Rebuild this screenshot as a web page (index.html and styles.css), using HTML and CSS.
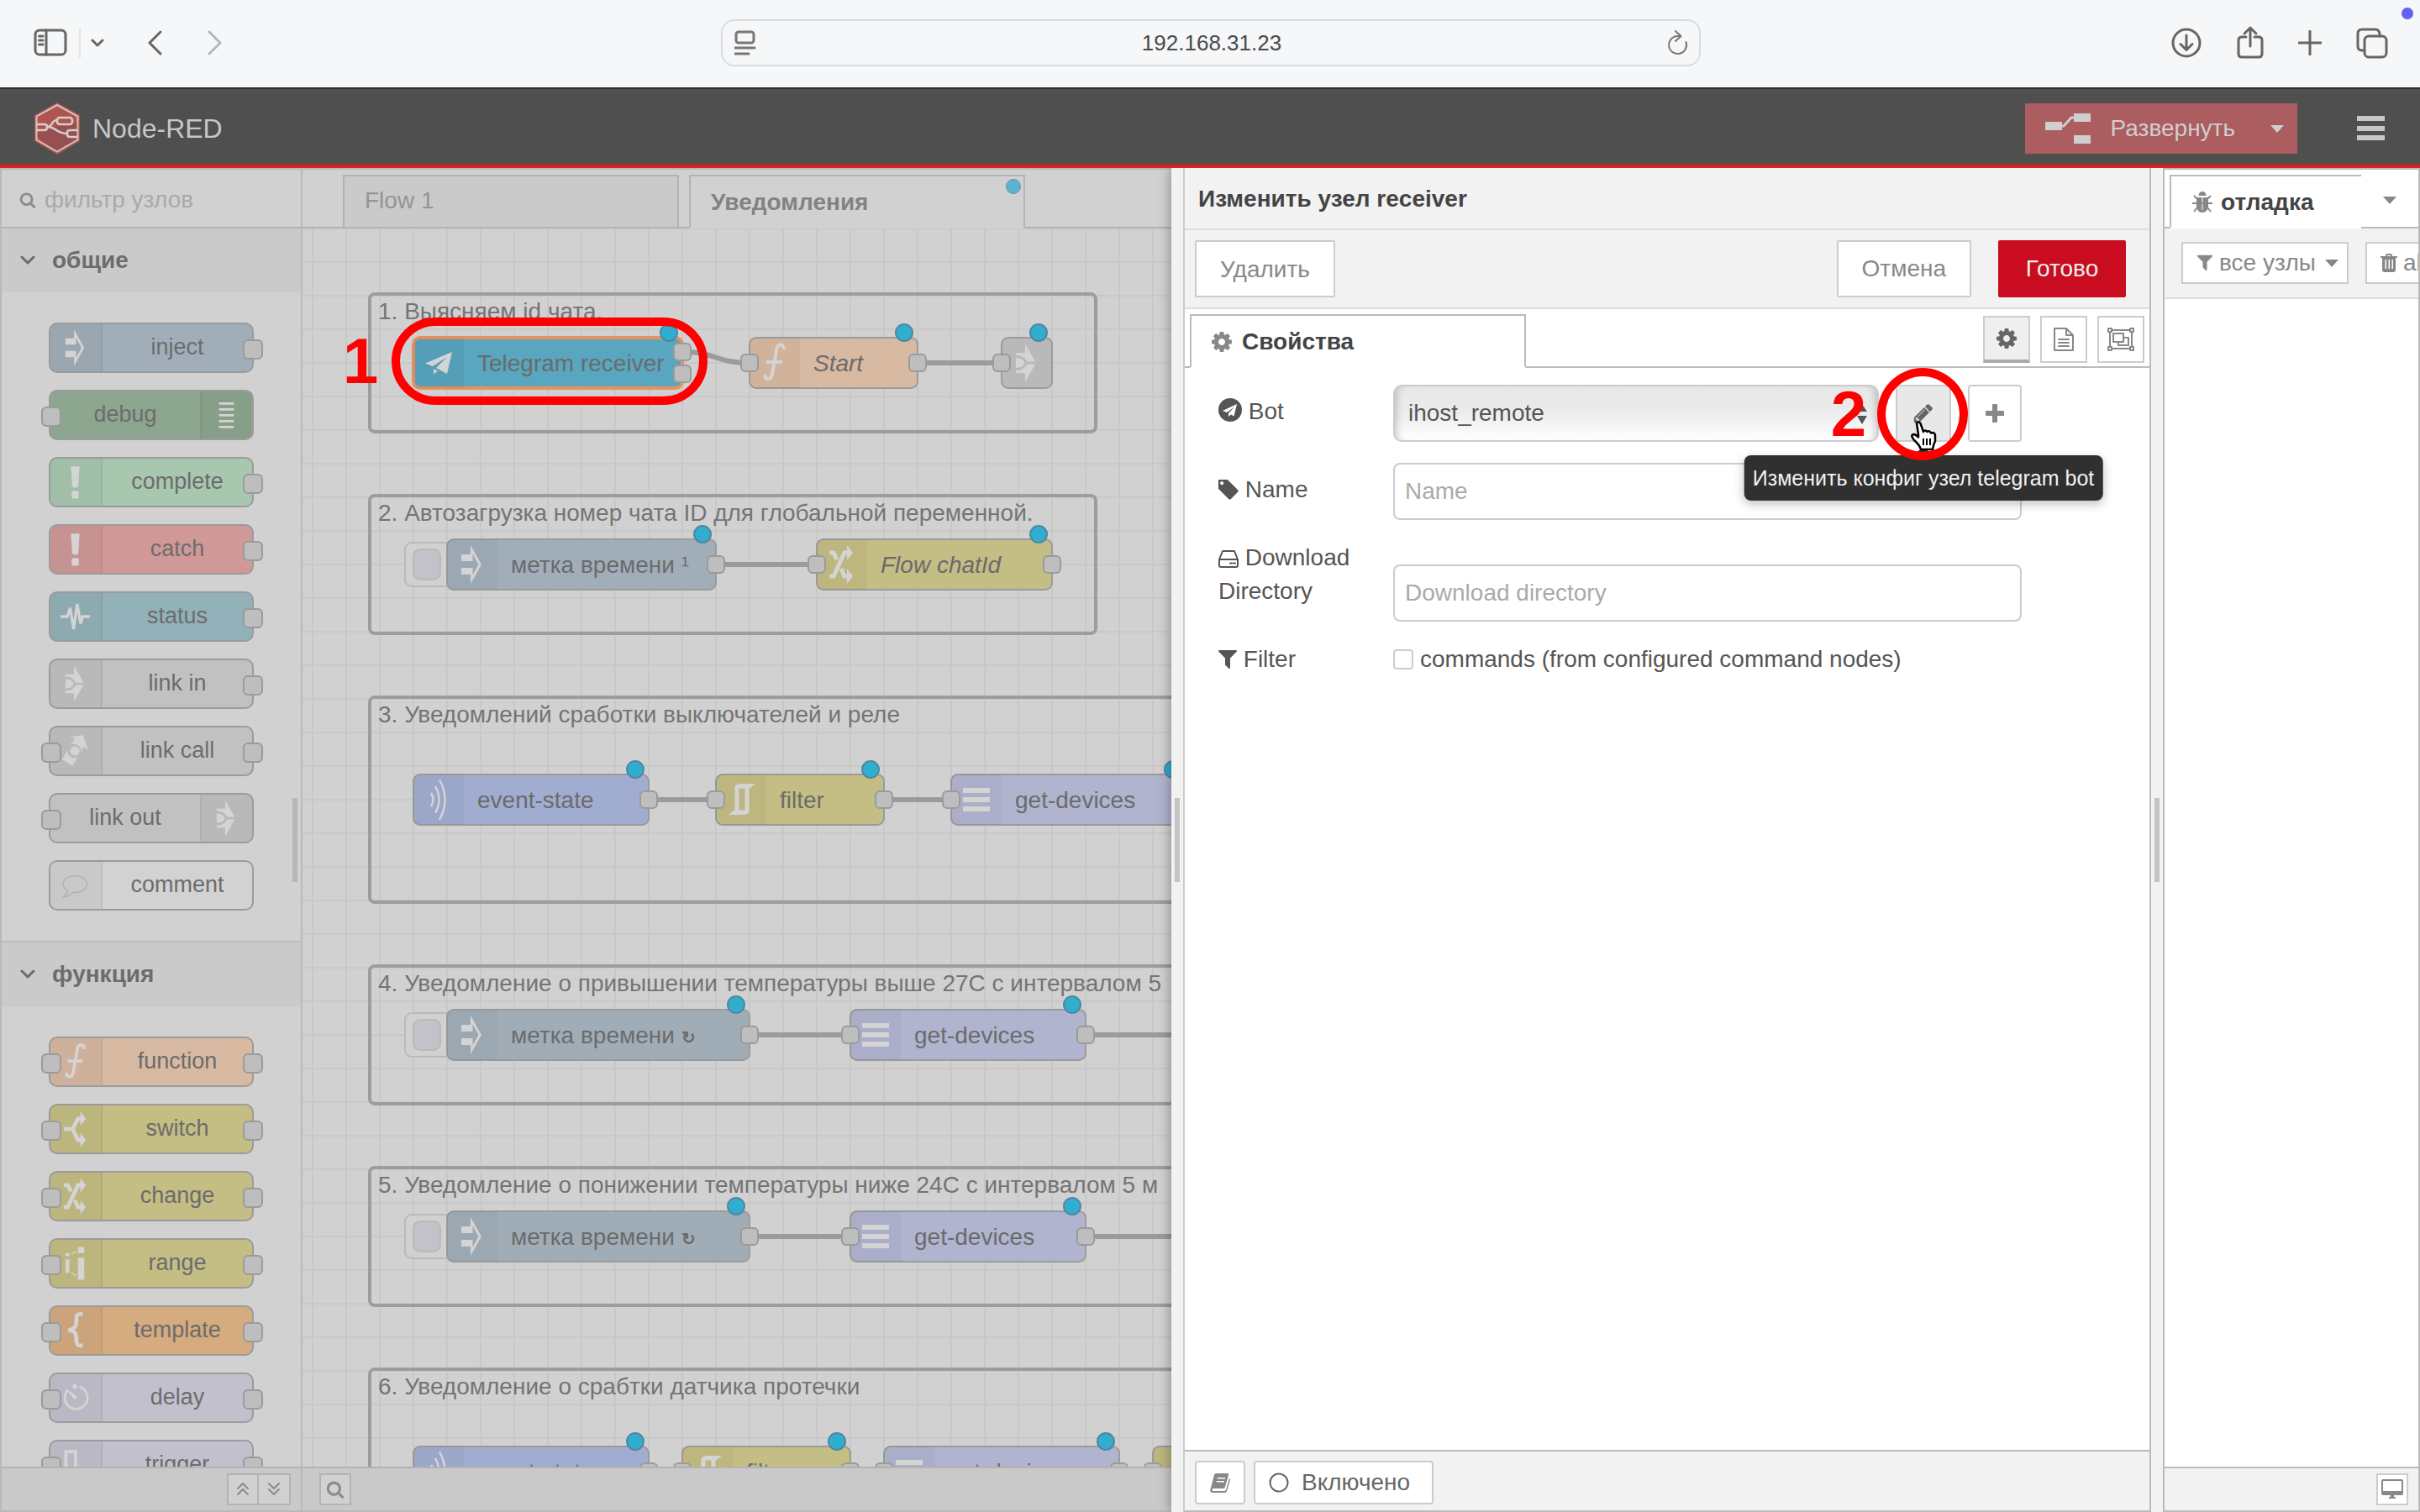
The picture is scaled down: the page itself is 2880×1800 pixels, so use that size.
FILE: index.html
```html
<!DOCTYPE html>
<html lang="ru">
<head>
<meta charset="utf-8">
<title>Node-RED</title>
<link rel="stylesheet" href="styles.css">
</head>
<body>
<svg class="defs" aria-hidden="true">
  <symbol id="n-inject" viewBox="0 0 60 60"><path fill-rule="evenodd" d="M17 18H28V7L41 30L28 53V42H17V34H30.500V42.500L37.500 30L30.500 17.500V26H17Z"/></symbol>
  <symbol id="n-debug" viewBox="0 0 60 60"><path d="M20 14h19v3H20zM20 21.500h19v3H20zM20 29h19v3H20zM20 36.500h19v3H20zM20 44h19v3H20z"/></symbol>
  <symbol id="n-alert" viewBox="0 0 60 60"><path d="M24 10H35L33.500 34Q33 37 29.500 37T25.500 34Z"/><rect x="25" y="41" width="9" height="10" rx="2"/></symbol>
  <symbol id="n-status" viewBox="0 0 60 60"><path class="line" stroke-width="3.500" d="M11 30H19.500L23 19L27.500 46L32 14L36.500 39L39 30H48"/></symbol>
  <symbol id="n-link" viewBox="0 0 60 60"><path d="M17 18H28V7L40 28.500H30C28.500 24 24 21 17 21ZM17 24C24 24 27 27 27 30S24 36 17 36ZM17 42H28V53L40 31.500H30C28.500 36 24 39 17 39Z"/></symbol>
  <symbol id="n-call" viewBox="0 0 60 60"><path d="M22 12L39 10L46 28L40 25L37 31A9 9 0 0 0 24 22L29 14ZM20 28A9 9 0 0 0 33 38L26 49L13 41Z"/><circle cx="29" cy="30" r="6"/></symbol>
  <symbol id="n-comment" viewBox="0 0 60 60"><path class="line" stroke-width="1.500" d="M29 18C20 18 14 23 14 28.500C14 32 16 35 20 37C19 41 17 43 14.500 45C20 44.500 24 42.500 26 39C37 40 44.500 35 44.500 28.500C44.500 23 38 18 29 18Z"/></symbol>
  <symbol id="n-function" viewBox="0 0 60 60"><path class="line" stroke-width="4" d="M41 14C41 7 33 6 32 15L27 43C26 51 18 51 18.500 44M20 29H39"/></symbol>
  <symbol id="n-switch" viewBox="0 0 60 60"><path class="line" stroke-width="5" d="M15 30H26L33 17H38M26 30L33 44H38"/><path d="M36 8L43 17L36 26ZM36 35L43 44L36 53Z"/></symbol>
  <symbol id="n-change" viewBox="0 0 60 60"><path class="line" stroke-width="5" d="M15 44H20L33 16H38M15 16H20L24 24M29 35L33 44H38"/><path d="M36 7L43 16L36 25ZM36 35L43 44L36 53Z"/></symbol>
  <symbol id="n-range" viewBox="0 0 60 60"><path d="M17 17h5v4h-5zM17 25h5v17h-5zM33 9h8v8h-8zM33 23h8v28h-8z"/><path class="line" stroke-width="1.500" d="M25 18L31 15M24 42L31 46"/></symbol>
  <symbol id="n-template" viewBox="0 0 60 60"><path class="line" stroke-width="5" d="M39 9C31 8 31 11 31 16C31 24 30 28 21 29.500C30 31 31 34 31 42C31 47 32 50 39 49"/></symbol>
  <symbol id="n-delay" viewBox="0 0 60 60"><path class="line" stroke-width="3" d="M20 20A14.500 14.500 0 1 0 35 16"/><path d="M16 17L31 28Q32 32 28 31.500Z"/><circle cx="29" cy="15.500" r="3"/></symbol>
  <symbol id="n-trigger" viewBox="0 0 60 60"><path class="line" stroke-width="4" d="M12 49H17.500V13H30V49H44"/></symbol>
  <symbol id="n-plane" viewBox="0 0 60 60"><path d="M46 17L14 30.500L23 34L40 23L27 36L40 43ZM24 37L29 40L24 43Z"/></symbol>
  <symbol id="n-event" viewBox="0 0 60 60"><path class="line" stroke-width="2.500" d="M21 22Q26 30 21 38M26 14Q35 30 26 46M31 6Q44 30 31 54"/></symbol>
  <symbol id="n-filter" viewBox="0 0 60 60"><rect class="line" x="25" y="14" width="12" height="31" rx="2" stroke-width="5"/><path d="M28 11H47L41 16H34ZM34 48H15L21 43H28Z"/></symbol>
  <symbol id="n-bars" viewBox="0 0 60 60"><path d="M14 16h32v6H14zM14 27h32v6H14zM14 38h32v6H14z"/></symbol>
  <symbol id="i-search" viewBox="0 0 1792 1792"><path d="M1216 832q0-185-131.500-316.500t-316.500-131.500-316.500 131.500-131.500 316.500 131.500 316.500 316.500 131.500 316.500-131.500 131.500-316.500zm512 832q0 52-38 90t-90 38q-54 0-90-38l-343-342q-179 124-399 124-143 0-273.500-55.500t-225-150-150-225-55.500-273.500 55.500-273.500 150-225 225-150 273.500-55.500 273.500 55.500 225 150 150 225 55.500 273.500q0 220-124 399l343 343q37 37 37 90z"/></symbol>
  <symbol id="i-cog" viewBox="0 128 1536 1536"><path d="M1024 896q0-106-75-181t-181-75-181 75-75 181 75 181 181 75 181-75 75-181zm512-109v222q0 12-8 23t-20 13l-185 28q-19 54-39 91 35 50 107 138 10 12 10 25t-9 23q-27 37-99 108t-94 71q-12 0-26-9l-138-108q-44 23-91 38-16 136-29 186-7 28-36 28h-222q-14 0-24.500-8.500t-11.500-21.500l-28-184q-49-16-90-37l-141 107q-10 9-25 9-14 0-25-11-126-114-165-168-7-10-7-23 0-12 8-23 15-21 51-66.500t54-70.500q-27-50-41-99l-183-27q-13-2-21-12.500t-8-23.500v-222q0-12 8-23t19-13l186-28q14-46 39-92-40-57-107-138-10-12-10-24 0-10 9-23 26-36 98.500-107.500t94.500-71.500q13 0 26 10l138 107q44-23 91-38 16-136 29-186 7-28 36-28h222q14 0 24.500 8.500t11.500 21.500l28 184q49 16 90 37l142-107q9-9 24-9 13 0 25 10 129 119 165 170 7 8 7 22 0 12-8 23-15 21-51 66.500t-54 70.500q26 50 41 98l183 28q13 2 21 12.500t8 23.500z"/></symbol>
  <symbol id="i-filter" viewBox="192 192 1408 1536"><path d="M1595 295q17 41-14 70l-493 493v742q0 42-39 59-13 5-25 5-27 0-45-19l-256-256q-19-19-19-45v-486l-493-493q-31-29-14-70 17-39 59-39h1280q42 0 59 39z"/></symbol>
  <symbol id="i-pencil" viewBox="0 0 1792 1792"><path d="M491 1536l91-91-235-235-91 91v107h128v128h107zm523-928q0-22-22-22-10 0-17 7l-542 542q-7 7-7 17 0 22 22 22 10 0 17-7l542-542q7-7 7-17zm-54-192l416 416-832 832h-416v-416zm683 96q0 53-37 90l-166 166-416-416 166-165q36-38 90-38 53 0 91 38l235 234q37 39 37 91z"/></symbol>
  <symbol id="i-tag" viewBox="192 192 1480 1480"><path d="M576 448q0-53-37.500-90.500t-90.500-37.500-90.500 37.500-37.500 90.500 37.500 90.500 90.500 37.500 90.500-37.500 37.500-90.500zm1067 576q0 53-37 90l-491 492q-39 37-91 37-53 0-90-37l-715-716q-38-37-64.500-101t-26.500-117v-416q0-52 38-90t90-38h416q53 0 117 26.500t102 64.500l715 714q37 39 37 91z"/></symbol>
  <symbol id="i-caret" viewBox="0 0 16 9"><path d="M0 0H16L8 9Z"/></symbol>
  <pattern id="grid" width="40" height="40" x="12" y="0" patternUnits="userSpaceOnUse"><path class="grid-line" d="M0 0H40M0 40H40M0 0V40M40 0V40"/></pattern>
</svg>

<header class="browser">
  <nav class="browser-nav" aria-label="История">
    <button class="bare" aria-label="Боковая панель"><svg class="stroke" width="40" height="34" viewBox="0 0 40 34"><rect x="2" y="2" width="36" height="29" rx="5"/><path d="M15 2V31M6.500 9H11M6.500 14H11M6.500 19H11"/></svg></button>
    <i class="rule"></i>
    <button class="bare" aria-label="Меню"><svg class="stroke" width="16" height="10" viewBox="0 0 16 10"><path d="M2 2L8 8L14 2"/></svg></button>
    <button class="bare back" aria-label="Назад"><svg class="stroke" width="20" height="32" viewBox="0 0 20 32"><path d="M17 3L4 16L17 29"/></svg></button>
    <button class="bare forward" aria-label="Вперёд"><svg class="stroke" width="20" height="32" viewBox="0 0 20 32"><path d="M3 3L16 16L3 29"/></svg></button>
  </nav>
  <div class="address">
    <svg class="stroke" width="26" height="32" viewBox="0 0 26 32"><rect x="2" y="3" width="21" height="13" rx="3"/><path d="M1 22H24M1 29H17"/></svg>
    <span>192.168.31.23</span>
    <svg class="stroke thin" width="26" height="32" viewBox="0 0 26 32"><path d="M22.500 15A10.500 10.500 0 1 1 12.500 8H16M10 2L16.500 8L10 14"/></svg>
  </div>
  <div class="browser-tools">
    <button class="bare" aria-label="Загрузки"><svg class="stroke" width="38" height="38" viewBox="0 0 38 38"><circle cx="19" cy="19" r="16"/><path d="M19 10V27M12 20.500L19 27.500L26 20.500"/></svg></button>
    <button class="bare" aria-label="Поделиться"><svg class="stroke" width="32" height="42" viewBox="0 0 32 42"><path d="M11 14H6Q2 14 2 18V34Q2 38 6 38H26Q30 38 30 34V18Q30 14 26 14H21M16 25V3M9 10L16 3L23 10"/></svg></button>
    <button class="bare" aria-label="Новая вкладка"><svg class="stroke" width="28" height="30" viewBox="0 0 28 30"><path d="M14 1V29M0 15H28"/></svg></button>
    <button class="bare tabs-button" aria-label="Вкладки"><svg class="stroke" width="38" height="38" viewBox="0 0 38 38"><rect x="10" y="11" width="26" height="25" rx="5"/><path d="M10 28H7Q2 28 2 23V8Q2 3 7 3H23Q27 3 28 8V11"/></svg></button>
  </div>
</header>

<header class="app-bar">
  <div class="brand">
    <svg width="56" height="64" viewBox="0 0 56 64"><path fill="#b0544f" d="M28 1L55 16V47L28 63L1 47V16Z"/><path fill="#97504f" d="M30 28L54 26V46L28 61L3 40V36Z"/><path fill="none" stroke="#d6c1bf" stroke-width="2" d="M28 4L52.500 17.500V45.500L28 59.500L3.500 45.500V17.500Z"/><g fill="none" stroke="#d6cfcf" stroke-width="2.500"><path d="M3 27H13Q16 27 16 30V31Q16 34 13 34H3M52 34H43Q40 34 40 37V39Q40 42 43 42H52M16 30C24 30 20 22 28 22M16 30C28 30 26 38 40 38"/><rect x="28" y="19" width="18" height="8" rx="3"/></g></svg>
    <span>Node-RED</span>
  </div>
  <button class="deploy">
    <svg width="54" height="38" viewBox="0 0 54 38"><path fill="#cfcfcf" d="M0 11H20V21H0ZM34 1H54V11H34ZM34 27H54V37H34Z"/><path fill="none" stroke="#cfcfcf" stroke-width="3" d="M19 16H22L31 6H35"/></svg>
    <span>Развернуть</span>
    <svg width="16" height="9"><use href="#i-caret"/></svg>
  </button>
  <button class="bare menu" aria-label="Меню"><svg width="36" height="30" viewBox="0 0 36 30"><path d="M1 0h33v6H1zM1 12h33v6H1zM1 23h33v6H1z"/></svg></button>
</header>

<main class="editor">
  <aside class="palette">
    <label class="palette-search"><svg width="22" height="20"><use href="#i-search"/></svg><input type="text" placeholder="фильтр узлов" aria-label="фильтр узлов"></label>
    <div class="palette-list">
      <h2 class="category"><svg class="stroke" width="18" height="12" viewBox="0 0 18 12"><path d="M2 2L9 9L16 2"/></svg>общие</h2>
      <div class="node-list">
        <div class="pnode c-inject out"><svg><use href="#n-inject"/></svg><span>inject</span></div>
        <div class="pnode c-debug in flip"><svg><use href="#n-debug"/></svg><span>debug</span></div>
        <div class="pnode c-complete out"><svg><use href="#n-alert"/></svg><span>complete</span></div>
        <div class="pnode c-catch out"><svg><use href="#n-alert"/></svg><span>catch</span></div>
        <div class="pnode c-status out"><svg><use href="#n-status"/></svg><span>status</span></div>
        <div class="pnode c-link out"><svg><use href="#n-link"/></svg><span>link in</span></div>
        <div class="pnode c-link in out"><svg><use href="#n-call"/></svg><span>link call</span></div>
        <div class="pnode c-link in flip"><svg><use href="#n-link"/></svg><span>link out</span></div>
        <div class="pnode c-comment"><svg><use href="#n-comment"/></svg><span>comment</span></div>
      </div>
      <h2 class="category"><svg class="stroke" width="18" height="12" viewBox="0 0 18 12"><path d="M2 2L9 9L16 2"/></svg>функция</h2>
      <div class="node-list">
        <div class="pnode c-function in out"><svg><use href="#n-function"/></svg><span>function</span></div>
        <div class="pnode c-switch in out"><svg><use href="#n-switch"/></svg><span>switch</span></div>
        <div class="pnode c-switch in out"><svg><use href="#n-change"/></svg><span>change</span></div>
        <div class="pnode c-switch in out"><svg><use href="#n-range"/></svg><span>range</span></div>
        <div class="pnode c-template in out"><svg><use href="#n-template"/></svg><span>template</span></div>
        <div class="pnode c-delay in out"><svg><use href="#n-delay"/></svg><span>delay</span></div>
        <div class="pnode c-delay in out"><svg><use href="#n-trigger"/></svg><span>trigger</span></div>
      </div>
    </div>
    <footer class="palette-footer">
      <button aria-label="Свернуть всё"><svg class="stroke" width="18" height="20" viewBox="0 0 18 20"><path d="M3 9L9 3L15 9M3 16L9 10L15 16"/></svg></button>
      <button aria-label="Развернуть всё"><svg class="stroke" width="18" height="20" viewBox="0 0 18 20"><path d="M3 3L9 9L15 3M3 10L9 16L15 10"/></svg></button>
    </footer>
    <i class="palette-grip"></i>
  </aside>

  <section class="workspace">
    <div class="flow-tabs">
      <button class="flow-tab">Flow 1</button>
      <button class="flow-tab active">Уведомления<i class="changed"></i></button>
    </div>
    <div class="canvas">
      <svg class="flow" width="100%" height="100%">
        <rect width="100%" height="100%" fill="url(#grid)"/>
        <g class="group">
          <rect x="80" y="78" width="864" height="164" rx="6"/><text x="90" y="108">1. Выясняем id чата.</text>
          <rect x="80" y="318" width="864" height="164" rx="6"/><text x="90" y="348">2. Автозагрузка номер чата ID для глобальной переменной.</text>
          <rect x="80" y="558" width="1400" height="244" rx="6"/><text x="90" y="588">3. Уведомлений сработки выключателей и реле</text>
          <rect x="80" y="878" width="1400" height="164" rx="6"/><text x="90" y="908">4. Уведомление о привышении температуры выше 27С с интервалом 5</text>
          <rect x="80" y="1118" width="1400" height="164" rx="6"/><text x="90" y="1148">5. Уведомление о понижении температуры ниже 24С с интервалом 5 м</text>
          <rect x="80" y="1358" width="1400" height="244" rx="6"/><text x="90" y="1388">6. Уведомление о срабтки датчика протечки</text>
        </g>
        <path class="wire" d="M452 147C492 147 492 160 532 160M732 160H832M492 400H612M412 680H492M692 680H772M532 960H652M932 960H1100M532 1200H652M932 1200H1100"/>

        <g class="node selected c-telegram" transform="translate(132 130)"><rect class="body" width="320" height="60" rx="8"/><path class="shade" d="M8 0H60V60H8Q0 60 0 52V8Q0 0 8 0Z"/><use href="#n-plane" width="60" height="60"/><text x="76" y="40">Telegram receiver</text><rect class="port" x="310" y="7" width="20" height="20" rx="5"/><rect class="port" x="310" y="33" width="20" height="20" rx="5"/><circle class="dot" cx="304" cy="-6" r="10"/></g>
        <g class="node c-function" transform="translate(532 130)"><rect class="body" width="200" height="60" rx="8"/><path class="shade" d="M8 0H60V60H8Q0 60 0 52V8Q0 0 8 0Z"/><use href="#n-function" width="60" height="60"/><text class="own" x="76" y="40">Start</text><rect class="port" x="-10" y="20" width="20" height="20" rx="5"/><rect class="port" x="190" y="20" width="20" height="20" rx="5"/><circle class="dot" cx="184" cy="-6" r="10"/></g>
        <g class="node c-linkout" transform="translate(832 130)"><rect class="body" width="60" height="60" rx="8"/><use href="#n-link" width="60" height="60"/><rect class="port" x="-10" y="20" width="20" height="20" rx="5"/><circle class="dot" cx="44" cy="-6" r="10"/></g>

        <g class="node c-inject" transform="translate(172 370)"><rect class="trigger" x="-50" y="4" width="64" height="52" rx="8"/><rect class="trigger key" x="-40" y="12" width="32" height="36" rx="8"/><rect class="body" width="320" height="60" rx="8"/><path class="shade" d="M8 0H60V60H8Q0 60 0 52V8Q0 0 8 0Z"/><use href="#n-inject" width="60" height="60"/><text x="76" y="40">метка времени ¹</text><rect class="port" x="310" y="20" width="20" height="20" rx="5"/><circle class="dot" cx="304" cy="-6" r="10"/></g>
        <g class="node c-switch" transform="translate(612 370)"><rect class="body" width="280" height="60" rx="8"/><path class="shade" d="M8 0H60V60H8Q0 60 0 52V8Q0 0 8 0Z"/><use href="#n-change" width="60" height="60"/><text class="own" x="76" y="40">Flow chatId</text><rect class="port" x="-10" y="20" width="20" height="20" rx="5"/><rect class="port" x="270" y="20" width="20" height="20" rx="5"/><circle class="dot" cx="264" cy="-6" r="10"/></g>

        <g class="node c-event" transform="translate(132 650)"><rect class="body" width="280" height="60" rx="8"/><path class="shade" d="M8 0H60V60H8Q0 60 0 52V8Q0 0 8 0Z"/><use href="#n-event" width="60" height="60"/><text x="76" y="40">event-state</text><rect class="port" x="270" y="20" width="20" height="20" rx="5"/><circle class="dot" cx="264" cy="-6" r="10"/></g>
        <g class="node c-switch" transform="translate(492 650)"><rect class="body" width="200" height="60" rx="8"/><path class="shade" d="M8 0H60V60H8Q0 60 0 52V8Q0 0 8 0Z"/><use href="#n-filter" width="60" height="60"/><text x="76" y="40">filter</text><rect class="port" x="-10" y="20" width="20" height="20" rx="5"/><rect class="port" x="190" y="20" width="20" height="20" rx="5"/><circle class="dot" cx="184" cy="-6" r="10"/></g>
        <g class="node c-devices" transform="translate(772 650)"><rect class="body" width="280" height="60" rx="8"/><path class="shade" d="M8 0H60V60H8Q0 60 0 52V8Q0 0 8 0Z"/><use href="#n-bars" width="60" height="60"/><text x="76" y="40">get-devices</text><rect class="port" x="-10" y="20" width="20" height="20" rx="5"/><circle class="dot" cx="264" cy="-6" r="10"/></g>

        <g class="node c-repeat" transform="translate(172 930)"><rect class="trigger" x="-50" y="4" width="64" height="52" rx="8"/><rect class="trigger key" x="-40" y="12" width="32" height="36" rx="8"/><rect class="body" width="360" height="60" rx="8"/><path class="shade" d="M8 0H60V60H8Q0 60 0 52V8Q0 0 8 0Z"/><use href="#n-inject" width="60" height="60"/><text x="76" y="40">метка времени <tspan class="loop">↻</tspan></text><rect class="port" x="350" y="20" width="20" height="20" rx="5"/><circle class="dot" cx="344" cy="-6" r="10"/></g>
        <g class="node c-devices" transform="translate(652 930)"><rect class="body" width="280" height="60" rx="8"/><path class="shade" d="M8 0H60V60H8Q0 60 0 52V8Q0 0 8 0Z"/><use href="#n-bars" width="60" height="60"/><text x="76" y="40">get-devices</text><rect class="port" x="-10" y="20" width="20" height="20" rx="5"/><rect class="port" x="270" y="20" width="20" height="20" rx="5"/><circle class="dot" cx="264" cy="-6" r="10"/></g>

        <g class="node c-repeat" transform="translate(172 1170)"><rect class="trigger" x="-50" y="4" width="64" height="52" rx="8"/><rect class="trigger key" x="-40" y="12" width="32" height="36" rx="8"/><rect class="body" width="360" height="60" rx="8"/><path class="shade" d="M8 0H60V60H8Q0 60 0 52V8Q0 0 8 0Z"/><use href="#n-inject" width="60" height="60"/><text x="76" y="40">метка времени <tspan class="loop">↻</tspan></text><rect class="port" x="350" y="20" width="20" height="20" rx="5"/><circle class="dot" cx="344" cy="-6" r="10"/></g>
        <g class="node c-devices" transform="translate(652 1170)"><rect class="body" width="280" height="60" rx="8"/><path class="shade" d="M8 0H60V60H8Q0 60 0 52V8Q0 0 8 0Z"/><use href="#n-bars" width="60" height="60"/><text x="76" y="40">get-devices</text><rect class="port" x="-10" y="20" width="20" height="20" rx="5"/><rect class="port" x="270" y="20" width="20" height="20" rx="5"/><circle class="dot" cx="264" cy="-6" r="10"/></g>

        <g class="node c-event" transform="translate(132 1450)"><rect class="body" width="280" height="60" rx="8"/><path class="shade" d="M8 0H60V60H8Q0 60 0 52V8Q0 0 8 0Z"/><use href="#n-event" width="60" height="60"/><text x="76" y="40">event-state</text><rect class="port" x="270" y="20" width="20" height="20" rx="5"/><circle class="dot" cx="264" cy="-6" r="10"/></g>
        <g class="node c-switch" transform="translate(452 1450)"><rect class="body" width="200" height="60" rx="8"/><path class="shade" d="M8 0H60V60H8Q0 60 0 52V8Q0 0 8 0Z"/><use href="#n-filter" width="60" height="60"/><text x="76" y="40">filter</text><rect class="port" x="-10" y="20" width="20" height="20" rx="5"/><rect class="port" x="190" y="20" width="20" height="20" rx="5"/><circle class="dot" cx="184" cy="-6" r="10"/></g>
        <g class="node c-devices" transform="translate(692 1450)"><rect class="body" width="280" height="60" rx="8"/><path class="shade" d="M8 0H60V60H8Q0 60 0 52V8Q0 0 8 0Z"/><use href="#n-bars" width="60" height="60"/><text x="76" y="40">get-devices</text><rect class="port" x="-10" y="20" width="20" height="20" rx="5"/><rect class="port" x="270" y="20" width="20" height="20" rx="5"/><circle class="dot" cx="264" cy="-6" r="10"/></g>
        <g class="node c-switch" transform="translate(1012 1450)"><rect class="body" width="200" height="60" rx="8"/><path class="shade" d="M8 0H60V60H8Q0 60 0 52V8Q0 0 8 0Z"/><rect class="port" x="-10" y="20" width="20" height="20" rx="5"/></g>

        <rect class="callout" x="111" y="111" width="366" height="94" rx="47"/>
        <text class="callout-number" x="48" y="184">1</text>
      </svg>
    </div>
    <footer class="workspace-footer"><button aria-label="Поиск"><svg width="24" height="22"><use href="#i-search"/></svg></button></footer>
  </section>

  <div class="gutter tray-gutter"><i></i></div>

  <section class="tray">
    <h1 class="tray-title">Изменить узел receiver</h1>
    <div class="tray-actions">
      <button class="btn">Удалить</button>
      <button class="btn cancel">Отмена</button>
      <button class="btn primary">Готово</button>
    </div>
    <div class="tray-tabs">
      <button class="tray-tab"><svg width="24" height="24"><use href="#i-cog"/></svg>Свойства</button>
      <div class="tray-views">
        <button class="active" aria-label="Свойства"><svg width="24" height="24"><use href="#i-cog"/></svg></button>
        <button aria-label="Описание"><svg class="stroke" width="26" height="30" viewBox="0 0 26 30"><path d="M2 2H16L24 10V28H2ZM16 2V10H24M7 15H19M7 19H19M7 23H19"/></svg></button>
        <button aria-label="Внешний вид"><svg class="stroke" width="34" height="30" viewBox="0 0 34 30"><path d="M4 4H30V26H4ZM8 8H20V18H8ZM20 13H26V22H14V18"/><g class="knob"><rect x="2" y="2" width="4" height="4"/><rect x="28" y="2" width="4" height="4"/><rect x="2" y="24" width="4" height="4"/><rect x="28" y="24" width="4" height="4"/></g></svg></button>
      </div>
    </div>
    <form class="tray-body">
      <div class="form-row">
        <label for="bot"><svg width="28" height="28" viewBox="0 0 28 28"><circle cx="14" cy="14" r="14"/><path fill="#fff" d="M22 7L5 15L10 17L19 10.500L12 18V22L15 19.500L18.500 21.500Z"/></svg> Bot</label>
        <div class="controls">
          <span class="select"><select id="bot"><option>ihost_remote</option></select><svg width="12" height="24" viewBox="0 0 12 24"><path d="M6 0L12 9H0ZM0 14H12L6 24Z"/></svg><b class="callout-two">2</b></span>
          <span class="edit">
            <button type="button" class="square pressed" aria-label="Изменить" aria-describedby="tip"><svg width="26" height="26"><use href="#i-pencil"/></svg></button>
            <span class="tooltip" id="tip" role="tooltip">Изменить конфиг узел telegram bot</span>
            <i class="callout-ring"></i>
            <svg class="pointer" width="34" height="38" viewBox="0 0 34 38"><path fill="#fff" stroke="#000" stroke-width="2.500" stroke-linejoin="round" d="M8 4Q10 1 12.500 4L16 14Q18 11 20.500 14Q23 12 25 15.500Q29 14 30 18V25Q28 29 27 35H13Q11 29 5 24Q1 19 3 17.500Q6 16 10 20.500V17Z"/><path fill="none" stroke="#000" stroke-width="2" d="M16 22V30M20 22V30M24 22V30"/></svg>
          </span>
          <button type="button" class="square add" aria-label="Добавить"><svg width="22" height="22" viewBox="0 0 22 22"><path d="M8 1Q8 0 9 0H13Q14 0 14 1V8H21Q22 8 22 9V13Q22 14 21 14H14V21Q14 22 13 22H9Q8 22 8 21V14H1Q0 14 0 13V9Q0 8 1 8H8Z"/></svg></button>
        </div>
      </div>
      <div class="form-row">
        <label for="name"><svg width="24" height="24"><use href="#i-tag"/></svg> Name</label>
        <div class="controls"><input class="text" id="name" type="text" placeholder="Name"></div>
      </div>
      <div class="form-row">
        <label for="dir"><svg class="stroke" width="24" height="22" viewBox="0 0 24 22"><path d="M1 12L5 2H19L23 12V19Q23 21 21 21H3Q1 21 1 19ZM1 12H23M14 16.500H16M18 16.500H20"/></svg> Download Directory</label>
        <div class="controls"><input class="text" id="dir" type="text" placeholder="Download directory"></div>
      </div>
      <div class="form-row check-row">
        <span class="legend"><svg width="22" height="24"><use href="#i-filter"/></svg> Filter</span>
        <label class="check"><input type="checkbox">commands (from configured command nodes)</label>
      </div>
    </form>
    <footer class="tray-footer">
      <button class="foot-btn book" aria-label="Справка"><svg width="24" height="24" viewBox="0 0 24 24"><path fill-rule="evenodd" d="M7 1H21Q22.500 1 22 3L18 17Q17.500 19 16 19H4Q2.500 19 2.500 20.500T4 22H17Q18.500 22 19 20.500L23 7Q24.500 8 24 9L20 22Q19.500 24 18 24H3Q-0.500 24 0.500 20L5 3Q5.500 1 7 1ZM9 6H18V7.500H8.500ZM8 10H17V11.500H7.500Z"/></svg></button>
      <button class="foot-btn"><svg class="stroke" width="24" height="24" viewBox="0 0 24 24"><circle cx="12" cy="12" r="10.500"/></svg>Включено</button>
    </footer>
  </section>

  <div class="gutter side-gutter"><i></i></div>

  <aside class="sidebar">
    <div class="side-tabs">
      <button class="side-tab"><svg width="24" height="26" viewBox="0 0 24 26"><path d="M7.500 5Q8 0 12 0T16.500 5ZM5 7H11.500V22H12.500V7H19V19Q17 25 12 25T5 19Z"/><path fill="none" stroke="#888" stroke-width="2" d="M0 14H24M2 5L6 9M22 5L18 9M2 24L6 19M22 24L18 19"/></svg>отладка</button>
      <button class="bare side-more" aria-label="Вкладки"><svg width="16" height="9"><use href="#i-caret"/></svg></button>
    </div>
    <div class="side-tools">
      <button><svg width="20" height="20"><use href="#i-filter"/></svg>все узлы<svg class="caret" width="16" height="9"><use href="#i-caret"/></svg></button>
      <button><svg width="20" height="22" viewBox="0 0 20 22"><path fill-rule="evenodd" d="M6 3Q6 0 8 0H12Q14 0 14 3H20V5H18V19Q18 22 15 22H5Q2 22 2 19V5H0V3ZM8 2V3H12V2ZM5.500 7H7V18H5.500ZM9.500 7H11V18H9.500ZM13.500 7H15V18H13.500Z"/></svg>all</button>
    </div>
    <div class="side-body"></div>
    <footer class="side-footer"><button aria-label="Открыть в новом окне"><svg width="26" height="24" viewBox="0 0 26 24"><path fill-rule="evenodd" d="M2 0H24Q26 0 26 2V17Q26 19 24 19H15V21H17V23H9V21H11V19H2Q0 19 0 17V2Q0 0 2 0ZM2 2V14H24V2Z"/></svg></button></footer>
  </aside>
</main>
</body>
</html>
```
FILE: styles.css
```css
* { box-sizing: border-box; }
html, body { height: 100%; }
body {
  margin: 0;
  display: flex;
  flex-direction: column;
  overflow: hidden;
  background: #fff;
  color: #555;
  font: 28px/40px "Liberation Sans", Arial, sans-serif;
}
button, input, select { font: inherit; color: inherit; margin: 0; }
button { display: flex; align-items: center; justify-content: center; padding: 0; border: 0; background: none; white-space: nowrap; }
svg { flex: none; fill: currentColor; }
.defs { position: absolute; width: 0; height: 0; }
.stroke { fill: none; stroke: currentColor; stroke-width: 3; stroke-linecap: round; stroke-linejoin: round; }
.stroke.thin { stroke-width: 2; }
.line { fill: none; stroke: currentColor; }

/* Browser chrome */
.browser {
  flex: none;
  height: 104px;
  padding: 0 38px 2px 40px;
  display: grid;
  grid-template-columns: 1fr 1166px 1fr;
  align-items: center;
  background: #f5f7f9;
  color: #666;
}
.browser-nav, .browser-tools { display: flex; align-items: center; }
.rule { width: 2px; height: 36px; margin: 0 12px 0 14px; background: #e2e4e6; }
.back { margin-left: 50px; }
.forward { margin-left: 52px; color: #b4b6b8; }
.address {
  height: 56px;
  padding: 0 12px 0 14px;
  display: flex;
  align-items: center;
  justify-content: space-between;
  border: 2px solid #dadcde;
  border-radius: 16px;
  color: #777;
  font-size: 26px;
}
.address span { color: #4a4a4a; }
.browser-tools { justify-content: flex-end; gap: 41px; }
.tabs-button { position: relative; }
.tabs-button::after {
  content: "";
  position: absolute;
  right: -30px;
  top: -23px;
  width: 14px;
  height: 14px;
  border-radius: 50%;
  background: #6361f5;
}

/* Application header */
.app-bar {
  flex: none;
  position: relative;
  z-index: 2;
  height: 96px;
  padding: 4px 40px 0;
  display: flex;
  align-items: center;
  border-top: 2px solid #2a2e2a;
  border-bottom: 4px solid #e31b1b;
  background: #4f4f4f;
  color: #c7c7c7;
}
.brand { display: flex; align-items: center; gap: 14px; margin-right: auto; font-size: 32px; }
.deploy { height: 60px; padding: 0 16px 0 24px; background: #ab5d5f; color: #cfcfcf; }
.deploy span { margin: 0 42px 0 24px; }
.menu { margin-left: 70px; }

/* Editor columns */
.editor { flex: 1; min-height: 0; display: flex; }
.palette {
  position: relative;
  flex: none;
  width: 360px;
  display: flex;
  flex-direction: column;
  border: 2px solid #b9b9b9;
  background: #d1d1d1;
  color: #6c6c6c;
}
.palette-search {
  flex: none;
  height: 70px;
  padding: 4px 22px 0 20px;
  display: flex;
  align-items: center;
  gap: 9px;
  border-bottom: 2px solid #b3b3b3;
  color: #8c8c8c;
}
.palette-search input { width: 100%; padding: 0; border: 0; background: none; outline: 0; }
.palette-search input::placeholder { color: #a9a9a9; opacity: 1; }
.palette-list { flex: 1; min-height: 0; overflow: hidden; }
.category {
  height: 76px;
  margin: 0;
  padding-left: 22px;
  display: flex;
  align-items: center;
  gap: 20px;
  background: #cacaca;
  font-size: 28px;
}
.node-list + .category { height: 78px; border-top: 2px solid #bdbdbd; }
.node-list { display: flex; flex-direction: column; align-items: center; gap: 20px; padding: 36px 0; }
.pnode {
  position: relative;
  flex: none;
  width: 244px;
  height: 60px;
  display: flex;
  border: 2px solid #9b9b9b;
  border-radius: 10px;
  font-size: 27px;
}
.pnode svg { width: 62px; height: 56px; padding: 0 1px; border-right: 2px solid rgba(0, 0, 0, .05); background: rgba(0, 0, 0, .04); color: #d4d4d4; border-radius: 8px 0 0 8px; }
.pnode span { flex: 1; display: flex; align-items: center; justify-content: center; padding-bottom: 2px; }
.pnode.flip { flex-direction: row-reverse; }
.pnode.flip svg { border-right: 0; border-left: 2px solid rgba(0, 0, 0, .05); border-radius: 0 8px 8px 0; }
.pnode.in::before, .pnode.out::after {
  content: "";
  position: absolute;
  top: 18px;
  width: 20px;
  height: 20px;
  border: 2px solid #9b9b9b;
  border-radius: 6px;
  background: #bebebe;
}
.pnode.in::before { left: -11px; }
.pnode.out::after { right: -13px; }
.c-inject { background: #a1aeb9; fill: #a1aeb9; }
.c-repeat { fill: #a0adb7; }
.c-debug { background: #8da68f; }
.c-complete { background: #a8c7af; }
.c-catch { background: #d09998; }
.c-status { background: #92b1b8; }
.c-link { background: #c1c1c1; }
.c-comment { background: #d2d2d2; }
.pnode.c-comment svg { color: #b0b0b0; }
.c-function { background: #d8b9a2; fill: #d8b9a2; }
.c-switch { background: #c4bd84; fill: #c4bd84; }
.c-template { background: #d5ab80; }
.c-delay { background: #c3c0ce; }
.c-telegram { fill: #58a6bf; }
.c-linkout { fill: #b9b9b9; }
.c-event { fill: #a0add0; }
.c-devices { fill: #b0b4cf; }
.palette-footer {
  flex: none;
  height: 52px;
  padding-right: 12px;
  display: flex;
  align-items: center;
  justify-content: flex-end;
  border-top: 2px solid #b3b3b3;
  background: #c9c9c9;
}
.palette-footer button, .workspace-footer button { width: 38px; height: 38px; border: 2px solid #b3b3b3; background: #d1d1d1; color: #8c8c8c; }
.palette-footer button + button { width: 40px; margin-left: -2px; }
.palette-footer .stroke { stroke-width: 2; }
.palette-grip { position: absolute; right: 4px; top: 748px; width: 6px; height: 100px; background: #b6b6b6; }

/* Flow workspace */
.workspace { flex: 1; min-width: 0; display: flex; flex-direction: column; border-top: 2px solid #b9b9b9; border-bottom: 2px solid #b9b9b9; background: #d1d1d1; }
.flow-tabs { flex: none; height: 70px; padding: 6px 48px 0; display: flex; gap: 12px; border-bottom: 2px solid #b3b3b3; }
.flow-tab {
  position: relative;
  flex: 0 1 400px;
  height: 64px;
  padding: 0 24px 2px;
  justify-content: flex-start;
  border: 2px solid #b3b3b3;
  background: #cacaca;
  color: #959595;
}
.flow-tab.active { padding: 2px 24px 0; border-bottom-color: #d1d1d1; background: #d1d1d1; color: #828282; font-weight: bold; }
.changed { position: absolute; right: 3px; top: 3px; width: 18px; height: 18px; border: 1px solid #5c97ae; border-radius: 50%; background: #5fb3d0; }
.canvas { flex: 1; min-height: 0; overflow: hidden; }
.flow { display: block; }
.grid-line { stroke: #c8c8c8; stroke-width: 2; }
.group rect { fill: none; stroke: #9d9d9d; stroke-width: 4; }
.group text { fill: #747474; }
.wire { fill: none; stroke: #9b9b9b; stroke-width: 6; }
.node .body { stroke: #9b9b9b; stroke-width: 2; }
.node.selected .body { stroke: #e5925f; stroke-width: 4; }
.node .shade { fill: #000; fill-opacity: .03; }
.node.selected .shade { fill-opacity: .04; }
.node use { fill: #d4d4d4; color: #d4d4d4; }
.node text { fill: #6b6b6b; }
.node .own { font-style: italic; }
.node .loop { font-size: 20px; font-weight: bold; }
.port { fill: #bebebe; stroke: #9b9b9b; stroke-width: 2; }
.dot { fill: #30aed0; stroke: #5088a0; stroke-width: 2; }
.trigger { fill: #d1d1d1; stroke: #bababa; stroke-width: 2; }
.trigger.key { fill: #c2c2c8; }
.callout { fill: none; stroke: #f00; stroke-width: 10; }
.flow .callout-number { fill: #f00; font-size: 76px; font-weight: bold; }
.workspace-footer { flex: none; height: 52px; padding-left: 20px; display: flex; align-items: center; border-top: 2px solid #b3b3b3; background: #c9c9c9; }

/* Splitters */
.gutter { flex: none; display: flex; align-items: center; justify-content: center; background: #f2f2f2; }
.gutter i { width: 6px; height: 100px; background: #c4c4c4; }
.tray-gutter { position: relative; z-index: 1; width: 14px; box-shadow: 0 0 16px rgba(0, 0, 0, .4); }
.side-gutter { width: 14px; }

/* Edit tray */
.tray {
  position: relative;
  z-index: 1;
  flex: none;
  width: 1152px;
  display: flex;
  flex-direction: column;
  border: solid #bbb;
  border-width: 0 2px 2px;
  border-left-color: #ccc;
  background: #fff;
}
.tray-title { flex: none; height: 74px; margin: 0; padding: 17px 16px 0; border-bottom: 2px solid #ddd; background: #f2f2f2; color: #444; font-size: 28px; }
.tray-actions { flex: none; height: 94px; padding: 12px 28px 12px 12px; display: flex; gap: 32px; border-bottom: 2px solid #ddd; background: #f2f2f2; }
.btn { height: 68px; padding: 2px 28px 0; border: 2px solid #ccc; border-radius: 2px; background: #fff; color: #888; }
.cancel { margin-left: auto; }
.primary { border-color: #ca0c20; background: #ca0c20; color: #eee; }
.primary, .cancel { padding: 0 28px; min-width: 152px; }
.cancel { min-width: 160px; }
.tray-tabs { flex: none; height: 70px; padding: 6px 6px 0; display: flex; justify-content: space-between; border-bottom: 2px solid #bbb; }
.tray-tab { width: 400px; height: 64px; padding: 1px 24px 0; justify-content: flex-start; gap: 12px; border: 2px solid #bbb; border-bottom-color: #fff; background: #fff; color: #444; font-weight: bold; }
.tray-tab svg, .side-tab svg { color: #888; }
.tray-views { display: flex; gap: 12px; padding-top: 2px; }
.tray-views button { width: 56px; height: 56px; border: 2px solid #ccc; background: #fff; color: #888; }
.tray-views .active { border-bottom: 4px solid #aaa; background: #efefef; color: #666; }
.tray-views .stroke { stroke-width: 2; }
.knob { fill: #fff; }
.tray-body { flex: 1; min-height: 0; padding: 20px 152px 0 40px; display: flex; flex-direction: column; gap: 25px; }
.form-row { display: flex; align-items: flex-end; }
.form-row > label:first-child { flex: none; width: 208px; padding: 0 32px 16px 0; }
.form-row > label:first-child svg, .legend svg { vertical-align: -3px; }
.form-row .stroke { stroke-width: 2; }
.legend { flex: none; width: 208px; }
.controls { flex: 1; display: flex; }
.text { width: 100%; height: 68px; padding: 0 12px; border: 2px solid #ccc; border-radius: 8px; background: #fff; outline: 0; }
.text::placeholder { color: #aaa; opacity: 1; }
.select { position: relative; flex: 1; display: flex; }
.select select {
  appearance: none;
  width: 100%;
  height: 68px;
  padding: 0 16px;
  border: 2px solid #ccc;
  border-radius: 10px;
  background: linear-gradient(#e6e6e6, #ececec 50%, #fff);
  box-shadow: inset 8px 0 8px -6px rgba(0, 0, 0, .2), inset -8px 0 8px -6px rgba(0, 0, 0, .2);
}
.select svg { position: absolute; right: 14px; top: 23px; }
.callout-two { position: absolute; right: 15px; top: 5px; color: #f00; font-size: 76px; line-height: 60px; }
.square { width: 66px; height: 68px; border: 2px solid #ccc; border-radius: 4px; background: #fff; color: #888; }
.square.add { width: 64px; }
.square.pressed { background: #e8e8e8; color: #666; }
.edit { position: relative; margin: 0 20px; }
.tooltip {
  position: absolute;
  left: 50%;
  top: 84px;
  transform: translateX(-50%);
  padding: 7px 10px;
  border-radius: 8px;
  background: #303030;
  box-shadow: 0 4px 12px rgba(0, 0, 0, .25);
  color: #f2f2f2;
  font-size: 25px;
  white-space: nowrap;
}
.tooltip::before { content: ""; position: absolute; left: 50%; top: -10px; margin-left: -12px; border: solid transparent; border-width: 0 12px 10px; border-bottom-color: #303030; }
.callout-ring { position: absolute; left: -22px; top: -20px; width: 108px; height: 110px; border: 10px solid #f00; border-radius: 50%; }
.pointer { position: absolute; left: 17px; top: 42px; }
.check-row { align-items: center; }
.check { display: flex; align-items: center; gap: 8px; }
.check input { appearance: none; width: 24px; height: 24px; border: 2px solid #ccc; border-radius: 4px; background: #fff; }
.tray-footer { flex: none; height: 72px; padding: 4px 12px 0; display: flex; align-items: center; gap: 10px; border-top: 2px solid #bbb; background: #f2f2f2; }
.foot-btn { height: 52px; padding: 0 26px 0 16px; gap: 15px; border: 2px solid #ccc; border-radius: 4px; background: #fff; color: #666; }
.foot-btn .stroke { stroke-width: 2; }
.book { width: 60px; padding: 0; color: #888; }

/* Sidebar */
.sidebar { flex: none; width: 306px; display: flex; flex-direction: column; overflow: hidden; border: 2px solid #bbb; background: #fff; }
.side-tabs { flex: none; height: 70px; padding: 6px 26px 0 6px; display: flex; justify-content: space-between; border-bottom: 2px solid #bbb; }
.side-tab { width: 228px; height: 64px; padding: 1px 0 0 25px; justify-content: flex-start; gap: 10px; border: 2px solid #bbb; border-right: 0; border-bottom-color: #fff; background: #fff; color: #444; font-weight: bold; }
.side-more { height: 60px; color: #888; }
.side-tools { flex: none; height: 84px; padding: 16px 20px; display: flex; gap: 20px; border-bottom: 2px solid #ddd; background: #f2f2f2; }
.side-tools button { flex: none; height: 50px; padding: 0 10px 0 16px; gap: 7px; border: 2px solid #ccc; background: #fff; color: #888; }
.caret { margin-left: 4px; }
.side-body { flex: 1; }
.side-footer { flex: none; height: 52px; padding: 0 12px; display: flex; align-items: center; justify-content: flex-end; border-top: 2px solid #bbb; background: #f2f2f2; }
.side-footer button { width: 38px; height: 38px; border: 2px solid #ccc; background: #fff; color: #888; }
```
